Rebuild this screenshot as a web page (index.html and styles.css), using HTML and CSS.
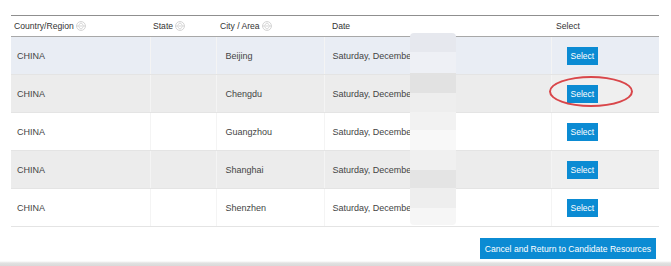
FILE: index.html
```html
<!DOCTYPE html>
<html lang="en">
<head>
    <meta charset="UTF-8">
    <meta name="viewport" content="width=device-width, initial-scale=1.0">
    <title>Select Location</title>
    <link rel="stylesheet" href="styles.css">
</head>
<body>
    <div class="page">
        <table class="locations">
            <colgroup>
                <col class="w-country">
                <col class="w-state">
                <col class="w-city">
                <col class="w-date">
                <col class="w-select">
            </colgroup>
            <thead>
                <tr>
                    <th>Country/Region <span class="sort"><svg width="10" height="10" viewBox="0 0 9 9"><circle cx="4.5" cy="4.5" r="4" fill="none" stroke="#cfcfcf" stroke-width="0.8"/><path d="M2.2 3.8 L4.5 1.6 L6.8 3.8 M2.2 5.2 L4.5 7.4 L6.8 5.2 M0.5 4.5 H8.5" fill="none" stroke="#cfcfcf" stroke-width="0.8"/></svg></span></th>
                    <th>State <span class="sort"><svg width="10" height="10" viewBox="0 0 9 9"><circle cx="4.5" cy="4.5" r="4" fill="none" stroke="#cfcfcf" stroke-width="0.8"/><path d="M2.2 3.8 L4.5 1.6 L6.8 3.8 M2.2 5.2 L4.5 7.4 L6.8 5.2 M0.5 4.5 H8.5" fill="none" stroke="#cfcfcf" stroke-width="0.8"/></svg></span></th>
                    <th class="h-city">City / Area <span class="sort"><svg width="10" height="10" viewBox="0 0 9 9"><circle cx="4.5" cy="4.5" r="4" fill="none" stroke="#cfcfcf" stroke-width="0.8"/><path d="M2.2 3.8 L4.5 1.6 L6.8 3.8 M2.2 5.2 L4.5 7.4 L6.8 5.2 M0.5 4.5 H8.5" fill="none" stroke="#cfcfcf" stroke-width="0.8"/></svg></span></th>
                    <th class="h-date">Date</th>
                    <th class="h-select">Select</th>
                </tr>
            </thead>
            <tbody>
                <tr class="row-active">
                    <td>CHINA</td><td></td><td class="city">Beijing</td><td class="date">Saturday, December</td>
                    <td class="pick"><button class="btn">Select</button></td>
                </tr>
                <tr class="row-grey">
                    <td>CHINA</td><td></td><td class="city">Chengdu</td><td class="date">Saturday, December</td>
                    <td class="pick"><button class="btn">Select</button></td>
                </tr>
                <tr>
                    <td>CHINA</td><td></td><td class="city">Guangzhou</td><td class="date">Saturday, December</td>
                    <td class="pick"><button class="btn">Select</button></td>
                </tr>
                <tr class="row-grey">
                    <td>CHINA</td><td></td><td class="city">Shanghai</td><td class="date">Saturday, December</td>
                    <td class="pick"><button class="btn">Select</button></td>
                </tr>
                <tr>
                    <td>CHINA</td><td></td><td class="city">Shenzhen</td><td class="date">Saturday, December</td>
                    <td class="pick"><button class="btn">Select</button></td>
                </tr>
            </tbody>
        </table>

        <div class="actions">
            <button class="btn btn-wide">Cancel and Return to Candidate Resources</button>
        </div>

        <!-- blurred-out part of the date column -->
        <div class="mask"></div>
        <!-- red highlight round the second button -->
        <div class="circle"></div>
    </div>
    <div class="footer-shade"></div>
</body>
</html>
```

FILE: styles.css
```css
html, body {
    height: 266px;
    overflow: hidden;
}

body {
    font-family: "Liberation Sans", Arial, sans-serif;
    margin: 0;
    background-color: #fff;
    color: #444;
}

.page {
    position: relative;
    padding: 15px 12px 0 11px;
    height: 246px;
    box-sizing: border-box;
}

.locations {
    width: 648px;
    border-collapse: collapse;
    table-layout: fixed;
    font-size: 9px;
}

.w-country { width: 139px; }
.w-state { width: 66px; }
.w-city { width: 108px; }
.w-date { width: 227px; }
.w-select { width: 108px; }

.locations th {
    text-align: left;
    font-weight: normal;
    font-size: 8.6px;
    color: #333;
    height: 20px;
    padding: 0 4px 0 3px;
    border-top: 1px solid #8f8f8f;
    border-bottom: 1px solid #a8a8a8;
    white-space: nowrap;
}

.locations th.h-city { padding-left: 4px; }
.locations th.h-date { padding-left: 8px; }
.locations th.h-select { padding-left: 5px; }

.sort {
    display: inline-block;
    vertical-align: -2px;
}

.sort svg {
    display: block;
}

.locations td {
    height: 37px;
    padding: 0 6px;
    border-bottom: 1px solid #e4e4e4;
    border-right: 1px solid #f4f4f4;
    white-space: nowrap;
    overflow: hidden;
}

.locations td.city {
    padding-left: 9px;
}

.locations td.date {
    padding-left: 8px;
}

.locations td.pick {
    padding-left: 15px;
    border-right: none;
}

.row-active td {
    background-color: #e9edf4;
}

.row-grey td {
    background-color: #ececec;
}

.row-grey td.pick {
    background-color: #efefef;
}

.btn {
    font-family: "Liberation Sans", Arial, sans-serif;
    font-size: 8.5px;
    color: #fff;
    background-color: #0b8bd3;
    border: none;
    height: 18px;
    padding: 0 4px;
    cursor: pointer;
}

.actions {
    display: flex;
    justify-content: flex-end;
    width: 645px;
    margin-top: 11px;
}

.btn-wide {
    height: 21px;
    padding: 0 5px;
    font-size: 8.6px;
}

.mask {
    position: absolute;
    left: 410px;
    top: 33px;
    width: 46px;
    height: 192px;
    background: linear-gradient(to bottom,
        #e6e8ee 0, #e6e8ee 19px,
        #eef0f5 19px, #eef0f5 40px,
        #e2e2e2 40px, #e2e2e2 60px,
        #eeeeee 60px, #eeeeee 79px,
        #f2f2f2 79px, #f2f2f2 97px,
        #f8f8f8 97px, #f8f8f8 117px,
        #f0f0f0 117px, #f0f0f0 137px,
        #e4e4e4 137px, #e4e4e4 155px,
        #eeeeee 155px, #eeeeee 175px,
        #f6f6f6 175px, #f6f6f6 192px);
    border-radius: 4px;
}

.circle {
    position: absolute;
    left: 549px;
    top: 76px;
    width: 80px;
    height: 27px;
    border: 2px solid #d9464a;
    border-radius: 50%;
}

.footer-shade {
    height: 20px;
    background: linear-gradient(to bottom, #fff 0, #fff 15px, #e2e2e2 17px, #d9d9d9 20px);
}
```
